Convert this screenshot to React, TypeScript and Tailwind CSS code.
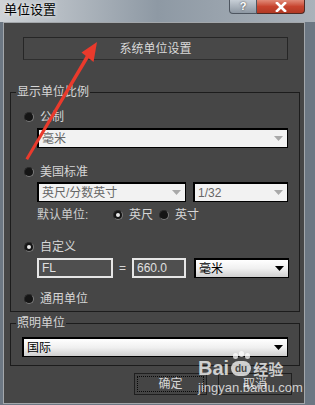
import React from 'react';

function Radio({ checked = false }: { checked?: boolean }) {
  return (
    <span className="w-[10px] h-[10px] rounded-full bg-[#151515] border border-[#7c7c7c] border-t-[#2a2a2a] border-l-[#2a2a2a] flex items-center justify-center shrink-0">
      {checked && <span className="w-[4px] h-[4px] rounded-full bg-[#e8e8e8]" />}
    </span>
  );
}

function Arrow({ enabled }: { enabled: boolean }) {
  return (
    <svg width="9" height="5" viewBox="0 0 9 5" className="shrink-0">
      <path d="M0 0h9L4.5 5z" fill={enabled ? '#000' : '#a9a9a9'} />
    </svg>
  );
}

function Select({ text, enabled = false, className = '' }: { text: string; enabled?: boolean; className?: string }) {
  return (
    <div
      className={`h-[20px] flex items-center justify-between pl-[3px] pr-[4px] border border-black border-t-2 border-l-2 ${
        enabled ? 'bg-gradient-to-b from-white via-[#f0f0f0] to-[#cfcfcf] text-black' : 'bg-[#f2f2f2] text-[#666666]'
      } ${className}`}
    >
      <span className="leading-[16px]">{text}</span>
      <Arrow enabled={enabled} />
    </div>
  );
}

function RadioRow({ label, checked = false, className = '' }: { label: string; checked?: boolean; className?: string }) {
  return (
    <div className={`flex items-center h-[14px] ml-[13px] ${className}`}>
      <Radio checked={checked} />
      <span className="ml-[6px] leading-[14px] text-[#d6d6d6]">{label}</span>
    </div>
  );
}

function Field({ text, className = '' }: { text: string; className?: string }) {
  return (
    <div className={`h-[20px] flex items-center px-[3px] bg-[#4f4f4f] border-2 border-[#e6e6e6] text-[#e0e0e0] ${className}`}>
      {text}
    </div>
  );
}

export default function App() {
  return (
    <div className="relative w-[315px] h-[405px] overflow-hidden bg-[#6c7783] font-['Liberation_Sans','Noto_Sans_CJK_SC',sans-serif] text-[12px]">
      {/* title bar */}
      <div className="h-[22px] flex justify-between bg-gradient-to-r from-[#cfd3d7] via-[#8e99a4] to-[#aab2ba]">
        <span className="pl-[4px] pt-[2px] leading-[16px] text-[13px] text-black [text-shadow:0_0_4px_#ffffff]">单位设置</span>
        <div className="flex h-[14px] mr-[10px]">
          <div className="w-[28px] h-[14px] rounded-bl-[4px] border border-t-0 border-[#4e5660] bg-gradient-to-b from-[#c7ced6] to-[#8d97a2] flex items-center justify-center text-white font-bold text-[11px] leading-none [text-shadow:0_0_2px_#333]">
            ?
          </div>
          <div className="w-[48px] h-[14px] rounded-br-[4px] border border-t-0 border-l-0 border-[#4e2a24] bg-gradient-to-b from-[#e08a78] via-[#c7442f] to-[#b23a24] flex items-center justify-center">
            <svg width="12" height="10" viewBox="0 0 12 10">
              <path d="M2 1l8 8M10 1L2 9" stroke="#fff" strokeWidth="2.6" strokeLinecap="square" />
            </svg>
          </div>
        </div>
      </div>

      {/* dialog body */}
      <div className="ml-[3px] w-[302px] h-[382px] border border-[#a3a7ab] bg-[#464646] px-[6px]">
        <button className="mt-[14px] ml-[13px] w-[265px] h-[23px] bg-[#484848] border border-[#262626] border-b-[#2e2e2e] text-[#d9d9d9] text-[12px] leading-[16px]">
          系统单位设置
        </button>

        <fieldset className="mt-[24px] w-[290px] h-[228px] border border-[#1c1c1c] px-0 pb-0">
          <legend className="ml-[5px] px-[1px] leading-[16px] text-[#d6d6d6]">显示单位比例</legend>
          <RadioRow label="公制" className="mt-[10px]" />
          <Select text="毫米" className="mt-[4px] ml-[26px] w-[251px]" />
          <RadioRow label="美国标准" className="mt-[17px]" />
          <div className="mt-[3px] ml-[26px] flex gap-[7px]">
            <Select text="英尺/分数英寸" className="w-[149px]" />
            <Select text="1/32" className="w-[95px]" />
          </div>
          <div className="mt-[6px] ml-[26px] h-[14px] flex items-center text-[#d6d6d6] leading-[14px]">
            <span className="w-[76px] text-[#cfcfcf]">默认单位:</span>
            <Radio checked />
            <span className="ml-[6px]">英尺</span>
            <span className="ml-[6px]">
              <Radio />
            </span>
            <span className="ml-[6px]">英寸</span>
          </div>
          <RadioRow label="自定义" checked className="mt-[18px]" />
          <div className="mt-[4px] ml-[26px] flex items-center">
            <Field text="FL" className="w-[76px]" />
            <span className="w-[19px] text-center text-[#d6d6d6]">=</span>
            <Field text="660.0" className="w-[54px]" />
            <Select text="毫米" enabled className="ml-[8px] w-[95px]" />
          </div>
          <RadioRow label="通用单位" className="mt-[14px]" />
        </fieldset>

        <fieldset className="mt-[3px] w-[290px] h-[51px] border border-[#1c1c1c] px-0 pb-0">
          <legend className="ml-[5px] px-[1px] leading-[16px] text-[#d6d6d6]">照明单位</legend>
          <Select text="国际" enabled className="mt-[6px] ml-[11px] w-[266px]" />
        </fieldset>

        <div className="mt-[7px] flex justify-end gap-[11px] pr-[6px]">
          <button className="w-[73px] h-[22px] bg-[#454545] border border-[#1f1f1f] p-[2px]">
            <span className="w-full h-full flex items-center justify-center border border-dotted border-[#0a0a0a] text-[#d6d6d6] leading-[14px]">
              确定
            </span>
          </button>
          <button className="w-[74px] h-[22px] bg-[#454545] border border-[#1f1f1f] text-[#d6d6d6] leading-[14px]">
            取消
          </button>
        </div>
      </div>

      {/* red annotation arrow */}
      <svg className="absolute left-0 top-0 pointer-events-none" width="315" height="405" viewBox="0 0 315 405">
        <path d="M25.5 158.5 L86 55.5 L89 57.5 L28 160 Z" fill="#ea3a2c" />
        <path d="M97 42 L81.5 52.5 L93.5 62 Z" fill="#ea3a2c" />
      </svg>

      {/* watermark */}
      <div className="absolute left-[198px] top-[351px] pointer-events-none text-white/75 font-['Liberation_Sans',sans-serif]">
        <div className="flex items-end leading-none">
          <span className="text-[20px] font-bold leading-[18px]">Bai</span>
          <span className="relative w-[22px] h-[26px] mx-[1px]">
            <span className="absolute left-[3px] top-[2px] w-[5px] h-[6px] rounded-full bg-white/75" />
            <span className="absolute left-[9px] top-0 w-[5px] h-[6px] rounded-full bg-white/75" />
            <span className="absolute left-[15px] top-[2px] w-[5px] h-[6px] rounded-full bg-white/75" />
            <span className="absolute left-[1px] top-[10px] w-[20px] h-[15px] rounded-[8px] bg-white/75 text-[10px] font-bold text-[#464646] flex items-center justify-center">du</span>
          </span>
          <span className="text-[15px] font-bold leading-[16px] font-['Noto_Sans_CJK_SC',sans-serif]">经验</span>
        </div>
        <div className="mt-[4px] text-[13px] leading-none">jingyan.baidu.com</div>
      </div>
    </div>
  );
}
